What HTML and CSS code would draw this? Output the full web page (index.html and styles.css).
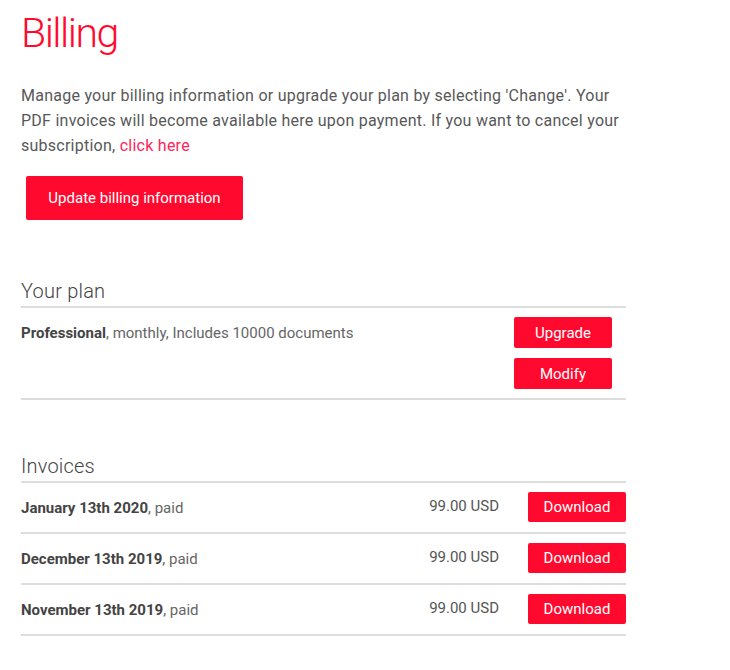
FILE: index.html
```html
<!DOCTYPE html>
<html lang="en">
<head>
<meta charset="utf-8">
<title>Billing</title>
<link rel="stylesheet" href="styles.css">
</head>
<body>
<main class="page">
  <h1 class="title">Billing</h1>
  <p class="intro">Manage your billing information or upgrade your plan by selecting 'Change'. Your PDF invoices will become available here upon payment. If you want to cancel your subscription, <a class="link" href="#">click here</a></p>
  <button class="btn btn-large" type="button">Update billing information</button>

  <section class="section section-plan">
    <h2 class="section-title">Your plan</h2>
    <div class="plan-row">
      <div class="plan-text"><strong>Professional</strong>, monthly, Includes 10000 documents</div>
      <div class="plan-actions">
        <button class="btn btn-small btn-plan" type="button">Upgrade</button>
        <button class="btn btn-small btn-plan" type="button">Modify</button>
      </div>
    </div>
  </section>

  <section class="section section-invoices">
    <h2 class="section-title">Invoices</h2>
    <div class="invoice-row">
      <div class="invoice-text"><strong>January 13th 2020</strong>, paid</div>
      <div class="invoice-price">99.00 USD</div>
      <button class="btn btn-small" type="button">Download</button>
    </div>
    <div class="invoice-row">
      <div class="invoice-text"><strong>December 13th 2019</strong>, paid</div>
      <div class="invoice-price">99.00 USD</div>
      <button class="btn btn-small" type="button">Download</button>
    </div>
    <div class="invoice-row">
      <div class="invoice-text"><strong>November 13th 2019</strong>, paid</div>
      <div class="invoice-price">99.00 USD</div>
      <button class="btn btn-small" type="button">Download</button>
    </div>
  </section>
</main>
</body>
</html>
```

FILE: styles.css
```css
html, body {
  margin: 0;
  padding: 0;
  background: #ffffff;
}

body {
  font-family: Roboto, "Liberation Sans", Arial, sans-serif;
  color: #555555;
}

.page {
  width: 605px;
  padding-left: 21px;
}

.title {
  margin: 7px 0 0;
  font-size: 41px;
  line-height: 52px;
  letter-spacing: -1.5px;
  font-weight: 300;
  color: #ff0a2e;
}

.intro {
  margin: 24px 0 0;
  font-size: 16px;
  line-height: 25px;
  letter-spacing: 0.25px;
  font-weight: 400;
  color: #585858;
}

.link {
  color: #ff2458;
  text-decoration: none;
}

.btn {
  display: block;
  border: none;
  border-radius: 2px;
  background: #ff0a2e;
  color: #ffffff;
  font-family: Roboto, "Liberation Sans", Arial, sans-serif;
  font-weight: 400;
  font-size: 15px;
  padding: 0;
  cursor: pointer;
}

.btn-large {
  margin: 18px 0 0 5px;
  width: 217px;
  height: 44px;
}

.btn-small {
  width: 98px;
  height: 30px;
}

.btn-plan {
  height: 31px;
}

.section-plan {
  margin-top: 57px;
}

.section-invoices {
  margin-top: 52px;
}

.section-title {
  margin: 0;
  padding-bottom: 1px;
  font-size: 20px;
  line-height: 28px;
  letter-spacing: 0.2px;
  font-weight: 300;
  color: #444444;
  border-bottom: 2px solid #dddddd;
}

.plan-row {
  display: flex;
  align-items: flex-start;
  padding: 9px 0 9px;
  border-bottom: 2px solid #dddddd;
}

.plan-text {
  flex: 1;
  padding-top: 6px;
  font-size: 15px;
  line-height: 20px;
  color: #666666;
}

.plan-text strong,
.invoice-text strong {
  font-weight: 700;
  color: #444444;
}

.plan-actions {
  display: flex;
  flex-direction: column;
  gap: 10px;
  margin-right: 14px;
}

.invoice-row {
  display: flex;
  align-items: flex-start;
  padding: 9px 0 10px;
  border-bottom: 2px solid #dddddd;
}

.invoice-text {
  flex: 1;
  padding-top: 6px;
  font-size: 15px;
  line-height: 20px;
  color: #666666;
}

.invoice-price {
  padding-top: 4px;
  margin-right: 29px;
  font-size: 15px;
  line-height: 20px;
  color: #555555;
}
```
